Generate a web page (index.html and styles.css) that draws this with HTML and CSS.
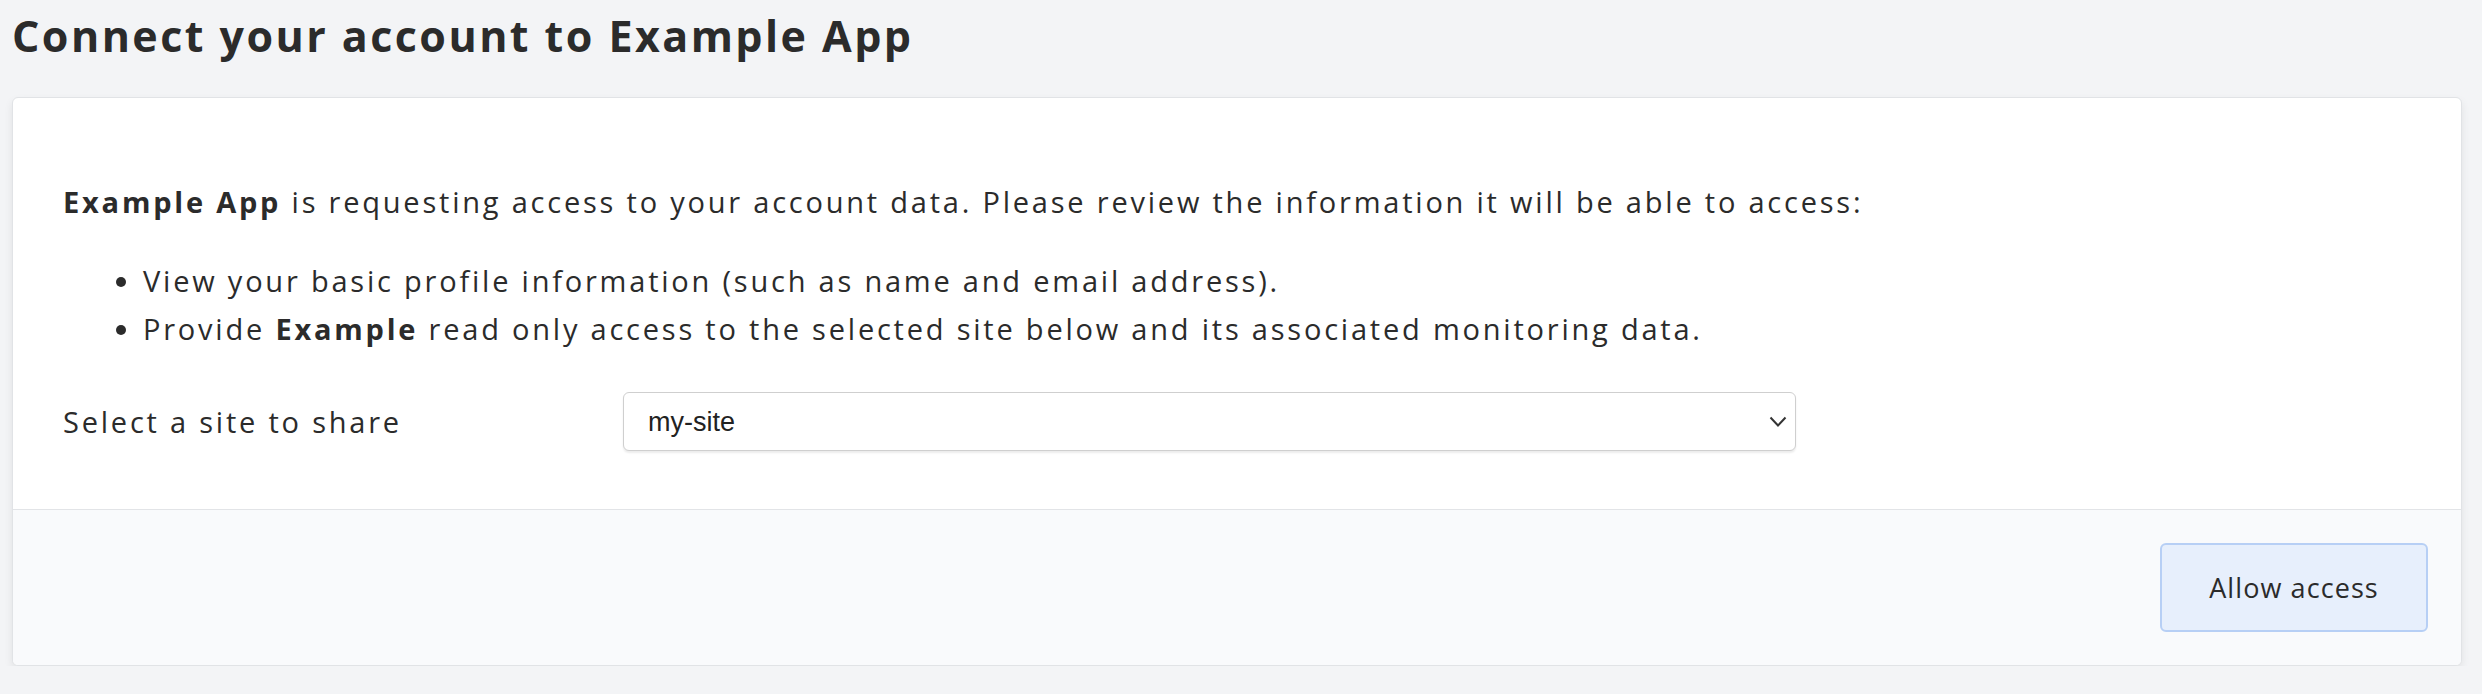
FILE: index.html
```html
<!DOCTYPE html>
<html lang="en">
<head>
  <meta charset="UTF-8">
  <meta name="viewport" content="width=device-width, initial-scale=1.0">
  <title>Connect your account</title>
  <link rel="stylesheet" href="styles.css">
</head>
<body>
  <h1 class="page-title">Connect your account to Example App</h1>
  <form class="card">
    <div class="card-body">
      <p class="intro"><strong>Example App</strong> is requesting access to your account data. Please review the information it will be able to access:</p>
      <ul class="scopes">
        <li>View your basic profile information (such as name and email address).</li>
        <li>Provide <strong>Example</strong> read only access to the selected site below and its associated monitoring data.</li>
      </ul>
      <div class="field">
        <label for="site" class="field-label">Select a site to share</label>
        <span class="select-wrap">
          <select id="site" class="field-select">
            <option>my-site</option>
          </select>
          <svg class="select-arrow" width="18" height="11" viewBox="0 0 18 11">
            <path d="M1.5 1.5 L9 9.5 L16.5 1.5" fill="none" stroke="#333" stroke-width="2"/>
          </svg>
        </span>
      </div>
    </div>
    <div class="card-footer">
      <button type="submit" class="btn-allow">Allow access</button>
    </div>
  </form>
</body>
</html>
```

FILE: styles.css
```css
body {
  margin: 0;
  padding: 0 20px 0 12px;
  background-color: #f3f4f6;
  color: #2b2b2b;
  font-family: "Open Sans", sans-serif;
}
.page-title {
  margin: 10px 0 35px;
  font-size: 43px;
  line-height: 1.2;
  font-weight: 700;
  letter-spacing: 0.057em;
}
.card {
  background-color: #fff;
  border: 1px solid #e1e3e6;
  border-radius: 6px;
  box-shadow: 0 4px 8px rgba(0, 0, 0, 0.08);
  overflow: hidden;
}
.card-body {
  padding: 80px 50px 58px;
  font-size: 29px;
  line-height: 1.64;
  letter-spacing: 0.096em;
}
.intro {
  margin: 0 0 32px;
}
.scopes {
  margin: 0 0 40px;
  padding-left: 80px;
}
.field {
  display: flex;
  align-items: center;
}
.field-label {
  width: 560px;
}
.select-wrap {
  position: relative;
  display: block;
}
.field-select {
  display: block;
  width: 1173px;
  height: 59px;
  padding: 0 24px;
  appearance: none;
  -webkit-appearance: none;
  font-family: "Liberation Sans", Arial, sans-serif;
  font-size: 27px;
  letter-spacing: 0;
  color: #222;
  background-color: #fff;
  border: 1px solid #cfcfcf;
  border-radius: 6px;
  box-shadow: 0 2px 2px rgba(0, 0, 0, 0.08);
}
.select-arrow {
  position: absolute;
  right: 9px;
  top: 24px;
  pointer-events: none;
}
.card-footer {
  display: flex;
  justify-content: flex-end;
  padding: 33px;
  background-color: #f9fafc;
  border-top: 1px solid #e2e4e7;
}
.btn-allow {
  width: 268px;
  height: 89px;
  font-family: "Open Sans", sans-serif;
  font-size: 27px;
  letter-spacing: 0.04em;
  color: #2b2b2b;
  background-color: #e7effc;
  border: 2px solid #b7cff5;
  border-radius: 6px;
}
```
